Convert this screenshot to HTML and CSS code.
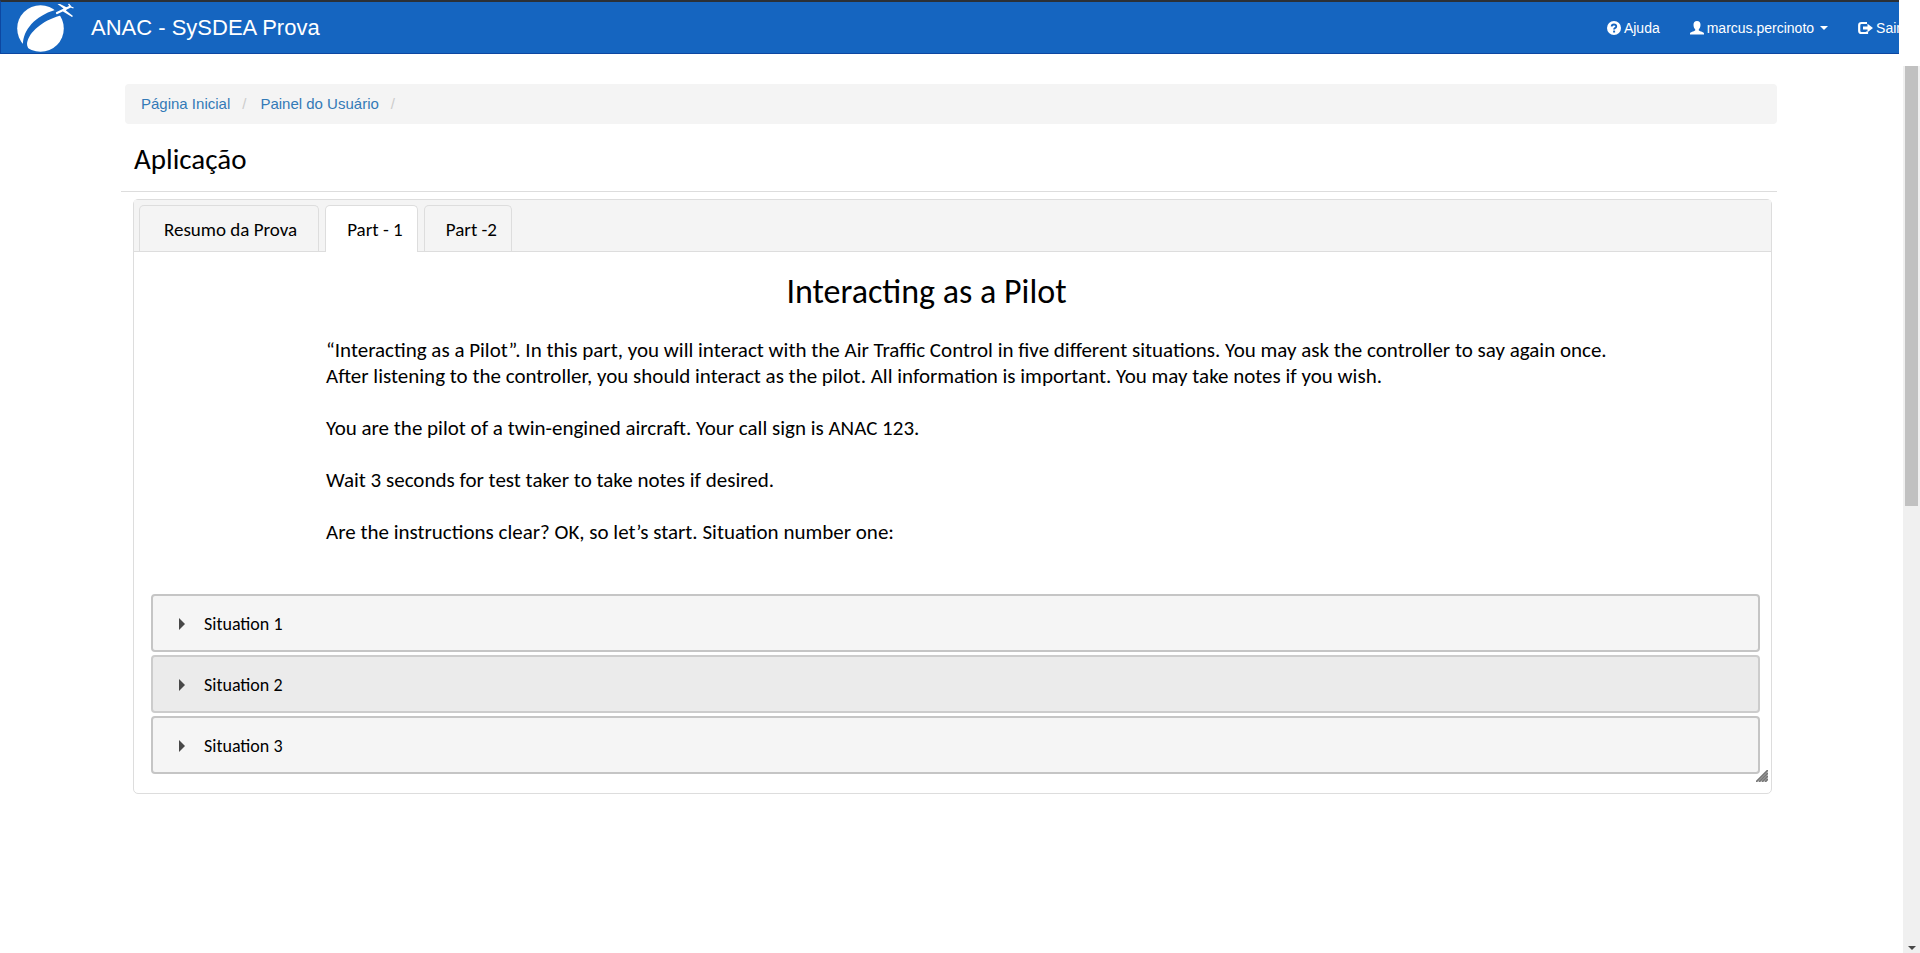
FILE: index.html
```html
<!DOCTYPE html>
<html lang="pt-BR">
<head>
<meta charset="utf-8">
<title>ANAC - SySDEA Prova</title>
<link rel="stylesheet" href="styles.css">
</head>
<body>
<header class="navbar">
  <a class="brand" href="#">
    <svg class="logo" viewBox="0 0 60 51" aria-hidden="true">
      <circle cx="23.500" cy="26.500" r="23.300" fill="#fff"/>
      <path d="M6 42.500C6 28 18 14 38 8L46 13C28 17 14 28 10.500 39C9.500 42 10 44 12 48L4 46Z" fill="#1565c0"/>
      <path d="M40 11L53 4.800" stroke="#fff" stroke-width="2.200" stroke-linecap="round" fill="none"/>
      <path d="M40.500 2L43 2L50 5.500L49 8.500L56 14L55 15L46 9.500L46.500 6.500Z" fill="#fff"/>
      <path d="M51.500 2L54 5L56.500 6" stroke="#fff" stroke-width="1.300" fill="none"/>
    </svg>
    <span class="brand-name">ANAC - SySDEA Prova</span>
  </a>
  <nav class="nav">
    <a class="nav-link" href="#">
      <svg class="icon" viewBox="0 0 14 14" aria-hidden="true">
        <circle cx="7" cy="7" r="7" fill="#fff"/>
        <path d="M4.700 5.600Q4.700 3.500 7 3.500T9.200 5.400Q9.200 6.500 7.900 7.100Q7.100 7.500 7.100 8.600" fill="none" stroke="#1565c0" stroke-width="1.900"/>
        <rect x="6.100" y="9.600" width="2" height="1.900" fill="#1565c0"/>
      </svg>
      Ajuda
    </a>
    <a class="nav-link" href="#">
      <svg class="icon" viewBox="0 0 14 14" aria-hidden="true">
        <path d="M7 0C9.300 0 10.500 1.500 10.500 3.800C10.500 5.700 9.800 7.400 8.800 8.300V9.600C10.200 10.500 14 11.200 14 12.600V13.500H0V12.600C0 11.200 3.800 10.500 5.200 9.600V8.300C4.200 7.400 3.500 5.700 3.500 3.800C3.500 1.500 4.700 0 7 0Z" fill="#fff"/>
      </svg>
      marcus.percinoto
      <span class="caret"></span>
    </a>
    <a class="nav-link" href="#">
      <svg class="icon icon-wide" viewBox="0 0 15 14" aria-hidden="true">
        <path d="M9 2H3.500Q1.200 2 1.200 4.300V9.700Q1.200 12 3.500 12H9V10.500" fill="none" stroke="#fff" stroke-width="2.200"/>
        <path d="M9.500 2.800L15 7L9.500 11.200V8.500H5V5.500H9.500Z" fill="#fff"/>
      </svg>
      Sair
    </a>
  </nav>
</header>
<div class="viewport">
  <main class="content">
    <nav aria-label="Trilha">
      <ol class="breadcrumb">
        <li><a href="#">Página Inicial</a></li>
        <li><a href="#">Painel do Usuário</a></li>
      </ol>
    </nav>
    <h1 class="page-title">Aplicação</h1>
    <section class="panel">
      <div class="tabs" role="tablist">
        <button class="tab tab-wide" role="tab" aria-selected="false">Resumo da Prova</button>
        <button class="tab tab-active" role="tab" aria-selected="true">Part - 1</button>
        <button class="tab" role="tab" aria-selected="false">Part -2</button>
      </div>
      <div class="panel-body" role="tabpanel">
        <h2 class="part-title">Interacting as a Pilot</h2>
        <div class="instructions">
          <p>“Interacting as a Pilot”. In this part, you will interact with the Air Traffic Control in five different situations. You may ask the controller to say again once.<br>After listening to the controller, you should interact as the pilot. All information is important. You may take notes if you wish.</p>
          <p>You are the pilot of a twin-engined aircraft. Your call sign is ANAC 123.</p>
          <p>Wait 3 seconds for test taker to take notes if desired.</p>
          <p>Are the instructions clear? OK, so let’s start. Situation number one:</p>
        </div>
        <div class="accordion">
          <button class="situation" aria-expanded="false"><span class="arrow"></span>Situation 1</button>
          <button class="situation situation-hover" aria-expanded="false"><span class="arrow"></span>Situation 2</button>
          <button class="situation" aria-expanded="false"><span class="arrow"></span>Situation 3</button>
        </div>
      </div>
      <svg class="grip" viewBox="0 0 12 12" aria-hidden="true">
        <path d="M0 12L12 0M3 12L12 3M6 12L12 6M9 12L12 9" stroke="#777" stroke-width="1.800"/>
      </svg>
    </section>
  </main>
  <div class="scrollbar" aria-hidden="true">
    <div class="thumb"></div>
    <div class="scroll-down"></div>
  </div>
</div>
</body>
</html>
```
FILE: styles.css
```css
* { box-sizing: border-box; }

body {
  margin: 0;
  min-height: 100vh;
  display: flex;
  flex-direction: column;
  background: #fff;
  color: #000;
  font-family: Calibri, Carlito, Lato, sans-serif;
}

a { text-decoration: none; }

button {
  font: inherit;
  color: inherit;
  cursor: pointer;
}

/* Top bar */
.navbar {
  display: flex;
  align-items: center;
  justify-content: space-between;
  height: 54px;
  margin-right: 21px;
  padding-left: 16px;
  overflow: hidden;
  background: #1565c0;
  border: 1px solid #0d47a1;
  border-top: 2px solid #2b3036;
  border-right: 0;
  font-family: "Liberation Sans", Arial, sans-serif;
}

.brand {
  display: flex;
  align-items: center;
  gap: 14px;
  color: #fff;
}

.logo { width: 60px; height: 51px; }
.brand-name { font-size: 22px; line-height: 24px; }

.nav {
  display: flex;
  gap: 30px;
  margin-right: -2px;
}

.nav-link {
  display: flex;
  align-items: center;
  gap: 3px;
  color: #fff;
  font-size: 14px;
  line-height: 20px;
  white-space: nowrap;
}

.icon { width: 14px; height: 14px; }
.icon-wide { width: 15px; }

.caret {
  margin-left: 3px;
  border: 4px solid transparent;
  border-top-color: #fff;
  border-bottom: 0;
}

/* Page area */
.viewport {
  flex: 1;
  display: flex;
  margin-top: 12px;
}

.content {
  flex: 1;
  padding: 18px 126px 0 121px;
}

.breadcrumb {
  display: flex;
  margin: 0 0 0 4px;
  padding: 10px 16px;
  list-style: none;
  background: #f4f4f4;
  border-radius: 4px;
  font: 15px/20px "Liberation Sans", Arial, sans-serif;
}

.breadcrumb a { color: #337ab7; }

.breadcrumb li::after {
  content: "/";
  padding: 0 14px 0 12px;
  color: #ccc;
}

.page-title {
  margin: 0 0 7px;
  padding: 19px 13px 16px;
  border-bottom: 1px solid #ddd;
  font-size: 29px;
  font-weight: 400;
  line-height: 32px;
}

.panel {
  position: relative;
  margin: 0 5px 0 12px;
  border: 1px solid #ddd;
  border-radius: 5px;
}

/* Tabs */
.tabs {
  display: flex;
  gap: 6px;
  padding: 5px 5px 0;
  background: #f4f4f4;
  border-bottom: 1px solid #ddd;
}

.tab {
  height: 46px;
  padding: 2px 14px 0 21px;
  background: #f4f4f4;
  border: 1px solid #ddd;
  border-bottom: 0;
  border-radius: 5px 5px 0 0;
  font-size: 19px;
  line-height: 24px;
}

.tab-wide { padding: 2px 21px 0 24px; }

.tab-active {
  height: 47px;
  margin-bottom: -1px;
  background: #fff;
}

.panel-body { padding: 22px 11px 19px 17px; }

.part-title {
  margin: 0 58px 27px 0;
  font-size: 34px;
  font-weight: 400;
  line-height: 36px;
  text-align: center;
}

.instructions {
  margin: 0 80px 49px 175px;
  font-size: 21px;
  line-height: 26px;
}

.instructions p { margin: 0 0 26px; }
.instructions p:last-child { margin-bottom: 0; }

/* Situations */
.accordion {
  display: flex;
  flex-direction: column;
  gap: 3px;
}

.situation {
  display: flex;
  align-items: center;
  gap: 19px;
  height: 58px;
  padding: 1px 26px 0;
  background: #f5f5f5;
  border: 2px solid #c5c5c5;
  border-radius: 4px;
  font-size: 18px;
  line-height: 24px;
}

.situation-hover { background: #ebebeb; border-color: #ccc; }

.arrow {
  border: 6px solid transparent;
  border-left-color: #484848;
  border-right: 0;
}

.grip {
  position: absolute;
  right: 3px;
  bottom: 11px;
  width: 12px;
  height: 12px;
}

/* Scrollbar */
.scrollbar {
  display: flex;
  flex-direction: column;
  justify-content: space-between;
  align-items: center;
  width: 17px;
  padding-bottom: 3px;
  background: #f0f0f0;
}

.thumb {
  width: 13px;
  height: 440px;
  background: #c1c1c1;
}

.scroll-down {
  border: 4px solid transparent;
  border-top-color: #484848;
  border-bottom: 0;
}
```
